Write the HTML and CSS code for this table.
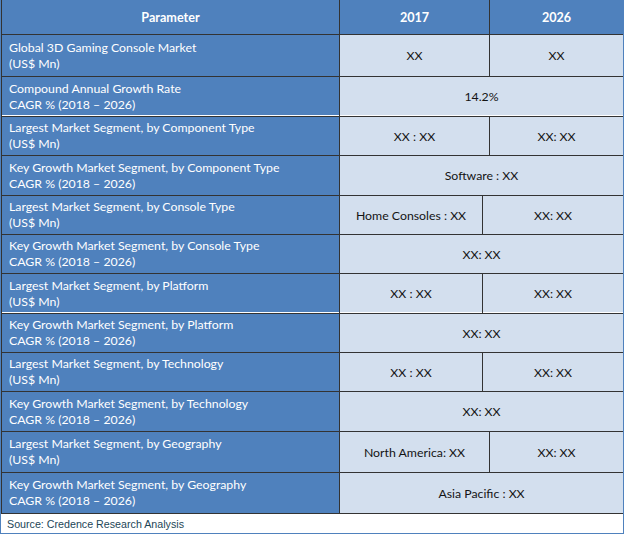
FILE: index.html
```html
<!DOCTYPE html>
<html lang="en">
<head>
<meta charset="utf-8">
<title>Global 3D Gaming Console Market</title>
<link rel="stylesheet" href="styles.css">
</head>
<body>
<div class="frame">
  <div class="grid">
    <div class="hd c1 r-h">Parameter</div>
    <div class="hd c23 r-h">2017</div>
    <div class="hd c4 r-h last">2026</div>

    <div class="p r1">Global 3D Gaming Console Market<br>(US$ Mn)</div>
    <div class="v c23 r1">XX</div>
    <div class="v c4 r1 last">XX</div>

    <div class="p r2 wl">Compound Annual Growth Rate<br>CAGR % (2018 – 2026)</div>
    <div class="v c234 r2 wl last">14.2%</div>

    <div class="p r3">Largest Market Segment, by Component Type<br>(US$ Mn)</div>
    <div class="v c23 r3">XX : XX</div>
    <div class="v c4 r3 last">XX: XX</div>

    <div class="p r4">Key Growth Market Segment, by Component Type<br>CAGR % (2018 – 2026)</div>
    <div class="v c234 r4 last">Software : XX</div>

    <div class="p r5">Largest Market Segment, by Console Type<br>(US$ Mn)</div>
    <div class="v c2 r5">Home Consoles : XX</div>
    <div class="v c34 r5 last">XX: XX</div>

    <div class="p r6">Key Growth Market Segment, by Console Type<br>CAGR % (2018 – 2026)</div>
    <div class="v c234 r6 last">XX: XX</div>

    <div class="p r7 wl">Largest Market Segment, by Platform<br>(US$ Mn)</div>
    <div class="v c2 r7 wl">XX : XX</div>
    <div class="v c34 r7 wl last">XX: XX</div>

    <div class="p r8">Key Growth Market Segment, by Platform<br>CAGR % (2018 – 2026)</div>
    <div class="v c234 r8 last">XX: XX</div>

    <div class="p r9">Largest Market Segment, by Technology<br>(US$ Mn)</div>
    <div class="v c2 r9">XX : XX</div>
    <div class="v c34 r9 last">XX: XX</div>

    <div class="p r10">Key Growth Market Segment, by Technology<br>CAGR % (2018 – 2026)</div>
    <div class="v c234 r10 last">XX: XX</div>

    <div class="p r11">Largest Market Segment, by Geography<br>(US$ Mn)</div>
    <div class="v c23 r11">North America: XX</div>
    <div class="v c4 r11 last">XX: XX</div>

    <div class="p r12">Key Growth Market Segment, by Geography<br>CAGR % (2018 – 2026)</div>
    <div class="v c234 r12 last">Asia Pacific : XX</div>
  </div>
  <div class="source">Source: Credence Research Analysis</div>
</div>
</body>
</html>
```

FILE: styles.css
```css
html, body {
  margin: 0;
  padding: 0;
  background: #ffffff;
}

.frame {
  box-sizing: border-box;
  width: 624px;
  height: 534px;
  border: 1px solid #4f81bd;
  border-top: 0;
  display: flex;
  flex-direction: column;
}

.grid {
  display: grid;
  grid-template-columns: 338px 143px 7px 133px;
  grid-template-rows: 35px 42px 40px 39px 40px 39px 39px 40px 39px 39px 40px 41px 41px;
  border-left: 1px solid #333333;
  font-family: "Lato", "Open Sans", sans-serif;
  font-size: 12.3px;
}

.grid > div {
  box-sizing: border-box;
  border-right: 1px solid #333333;
  border-bottom: 1px solid #333333;
  display: flex;
  align-items: center;
}

.grid > div.last {
  border-right: 0;
}

.hd {
  background: #4f81bd;
  color: #ffffff;
  font-weight: bold;
  font-size: 12.6px;
  justify-content: center;
}

.p {
  grid-column: 1;
  background: #4f81bd;
  color: #ffffff;
  line-height: 16px;
  padding-left: 7px;
}

.v {
  background: #d3dfee;
  color: #141414;
  justify-content: center;
}

.c1 { grid-column: 1; }
.c2 { grid-column: 2; }
.c23 { grid-column: 2 / 4; }
.c34 { grid-column: 3 / 5; }
.c4 { grid-column: 4; }
.c234 { grid-column: 2 / 5; }

.wl {
  box-shadow: inset 0 -1px 0 #ffffff;
}

.source {
  flex: 1;
  display: flex;
  align-items: center;
  padding-left: 6px;
  font-family: "Liberation Sans", Arial, sans-serif;
  font-size: 10.7px;
  color: #1d4657;
}
```
